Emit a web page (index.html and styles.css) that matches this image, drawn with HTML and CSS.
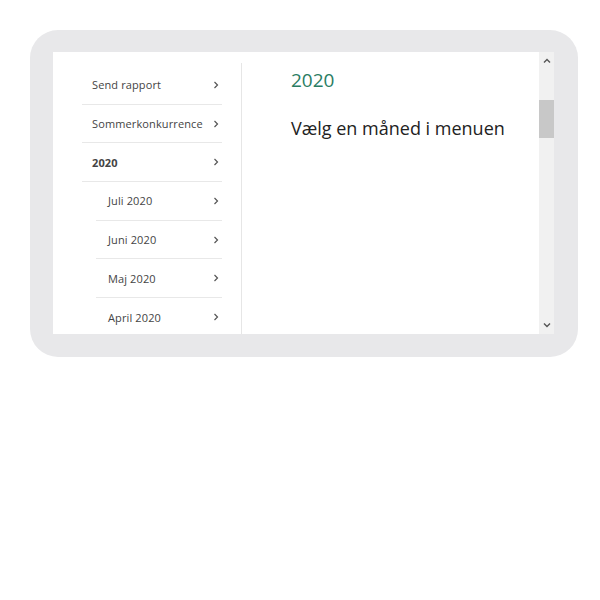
FILE: index.html
```html
<!DOCTYPE html>
<html lang="da">
<head>
<meta charset="utf-8">
<title>2020</title>
<link rel="stylesheet" href="styles.css">
</head>
<body>
<div class="frame">
  <div class="window">
    <div class="content">
      <nav class="nav">
        <ul class="menu">
          <li class="item"><span>Send rapport</span><svg class="chev" viewBox="0 0 6 8"><path d="M1.5 1 L4.5 4 L1.5 7"/></svg></li>
          <li class="item"><span>Sommerkonkurrence</span><svg class="chev" viewBox="0 0 6 8"><path d="M1.5 1 L4.5 4 L1.5 7"/></svg></li>
          <li class="item active"><span>2020</span><svg class="chev" viewBox="0 0 6 8"><path d="M1.5 1 L4.5 4 L1.5 7"/></svg></li>
          <li class="item sub"><span>Juli 2020</span><svg class="chev" viewBox="0 0 6 8"><path d="M1.5 1 L4.5 4 L1.5 7"/></svg></li>
          <li class="item sub"><span>Juni 2020</span><svg class="chev" viewBox="0 0 6 8"><path d="M1.5 1 L4.5 4 L1.5 7"/></svg></li>
          <li class="item sub"><span>Maj 2020</span><svg class="chev" viewBox="0 0 6 8"><path d="M1.5 1 L4.5 4 L1.5 7"/></svg></li>
          <li class="item sub last"><span>April 2020</span><svg class="chev" viewBox="0 0 6 8"><path d="M1.5 1 L4.5 4 L1.5 7"/></svg></li>
        </ul>
      </nav>
      <main class="main">
        <h1 class="title">2020</h1>
        <p class="lead">Vælg en måned i menuen</p>
      </main>
    </div>
    <div class="scrollbar">
      <svg class="arrow" viewBox="0 0 8 6"><path d="M1 4.5 L4 1.5 L7 4.5"/></svg>
      <div class="track"><div class="thumb"></div></div>
      <svg class="arrow" viewBox="0 0 8 6"><path d="M1 1.5 L4 4.5 L7 1.5"/></svg>
    </div>
  </div>
</div>
</body>
</html>
```
FILE: styles.css
```css
* { box-sizing: border-box; }
html, body { margin: 0; padding: 0; background: #fff; }
body { font-family: "Open Sans", "Noto Sans", sans-serif; }

.frame {
  margin: 30px 0 0 30px;
  width: 548px;
  height: 327px;
  background: #e8e8ea;
  border-radius: 28px;
  padding: 22px 24px 23px 23px;
}

.window {
  display: flex;
  height: 282px;
  overflow: hidden;
}

.content {
  flex: 1;
  display: flex;
  background: #fff;
}

.nav {
  width: 189px;
  margin-top: 11px;
  padding: 3px 19px 0 29px;
  border-right: 1px solid #e6e6e6;
}

.menu {
  list-style: none;
  margin: 0;
  padding: 0;
}

.item {
  display: flex;
  align-items: center;
  justify-content: space-between;
  height: 38.7px;
  padding: 0 3px 0 10px;
  border-bottom: 1px solid #e8e8e8;
  font-size: 11px;
  letter-spacing: 0.12px;
  color: #444;
}

.item.active { font-weight: 700; color: #444; }

.item.sub {
  margin-left: 14px;
  padding-left: 12px;
}

.item.last { border-bottom: none; }

.chev {
  width: 6px;
  height: 8px;
  fill: none;
  stroke: #555;
  stroke-width: 1.2;
}

.main {
  flex: 1;
  padding: 15px 0 0 49px;
}

.title {
  margin: 0;
  font-size: 19px;
  font-weight: 400;
  line-height: 26px;
  color: #2a7d63;
}

.lead {
  margin: 23px 0 0;
  font-size: 18px;
  line-height: 24px;
  color: #222;
}

.scrollbar {
  width: 15px;
  background: #f1f1f1;
  display: flex;
  flex-direction: column;
  align-items: center;
}

.arrow {
  width: 8px;
  height: 6px;
  margin: 6px 0;
  fill: none;
  stroke: #555;
  stroke-width: 1.4;
}

.track {
  flex: 1;
  width: 100%;
  padding-top: 30px;
}

.thumb {
  width: 100%;
  height: 38px;
  background: #c8c8c8;
}
```
